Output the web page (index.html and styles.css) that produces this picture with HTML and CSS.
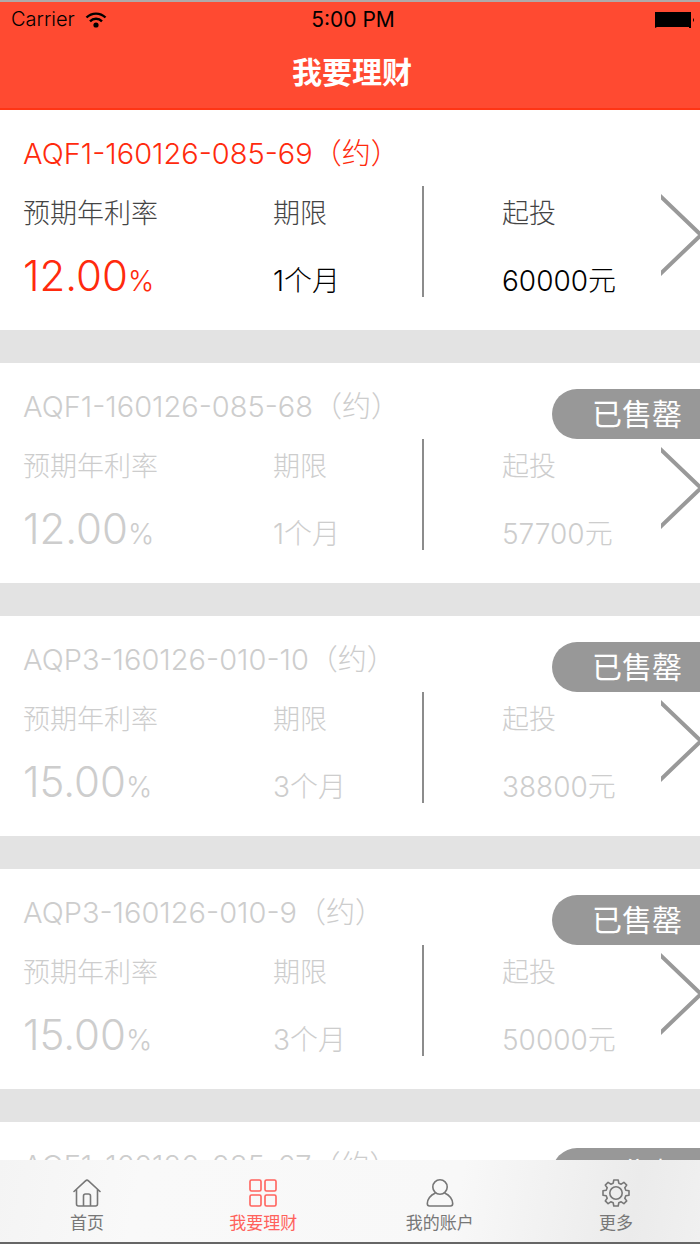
FILE: index.html
```html
<!DOCTYPE html>
<html lang="zh-CN">
<head>
    <meta charset="UTF-8">
    <meta name="viewport" content="width=device-width, initial-scale=1.0">
    <title>我要理财</title>
    <link rel="stylesheet" href="styles.css">
</head>
<body>
    <!-- 顶部 -->
    <header class="header">
        <div class="status-bar">
            <div class="carrier">
                <span>Carrier</span>
                <svg class="wifi" viewBox="0 0 22 16" aria-hidden="true">
                    <path d="M1.5 5.5a13.5 13.5 0 0 1 19 0M5 9.3a8.5 8.5 0 0 1 12 0" fill="none" stroke="#000" stroke-width="2.4"/>
                    <circle cx="11" cy="13" r="2.6"/>
                </svg>
            </div>
            <span class="time">5:00 PM</span>
            <div class="power">
                <svg class="battery" viewBox="0 0 40 16" aria-hidden="true">
                    <path d="M0 0h36v16H34V15H2L0 16zM38 6q2 2 0 4z"/>
                </svg>
            </div>
        </div>
        <h1 class="page-title">我要理财</h1>
    </header>

    <!-- 产品列表 -->
    <main class="list">
        <a class="card on-sale" href="#">
            <h2 class="card-title">AQF1-160126-085-69（约）</h2>
            <div class="card-body">
                <div class="cell">
                    <span class="label">预期年利率</span>
                    <span class="value rate"><b>12.00</b>%</span>
                </div>
                <div class="cell">
                    <span class="label">期限</span>
                    <span class="value">1个月</span>
                </div>
                <div class="cell amount">
                    <span class="label">起投</span>
                    <span class="value">60000元</span>
                </div>
                <svg class="arrow" viewBox="0 0 39 84" aria-hidden="true"><path d="M-3 0L40 41L-3 82"/></svg>
            </div>
        </a>

        <a class="card" href="#">
            <span class="badge">已售罄</span>
            <h2 class="card-title">AQF1-160126-085-68（约）</h2>
            <div class="card-body">
                <div class="cell">
                    <span class="label">预期年利率</span>
                    <span class="value rate"><b>12.00</b>%</span>
                </div>
                <div class="cell">
                    <span class="label">期限</span>
                    <span class="value">1个月</span>
                </div>
                <div class="cell amount">
                    <span class="label">起投</span>
                    <span class="value">57700元</span>
                </div>
                <svg class="arrow" viewBox="0 0 39 84" aria-hidden="true"><path d="M-3 0L40 41L-3 82"/></svg>
            </div>
        </a>

        <a class="card" href="#">
            <span class="badge">已售罄</span>
            <h2 class="card-title">AQP3-160126-010-10（约）</h2>
            <div class="card-body">
                <div class="cell">
                    <span class="label">预期年利率</span>
                    <span class="value rate"><b>15.00</b>%</span>
                </div>
                <div class="cell">
                    <span class="label">期限</span>
                    <span class="value">3个月</span>
                </div>
                <div class="cell amount">
                    <span class="label">起投</span>
                    <span class="value">38800元</span>
                </div>
                <svg class="arrow" viewBox="0 0 39 84" aria-hidden="true"><path d="M-3 0L40 41L-3 82"/></svg>
            </div>
        </a>

        <a class="card" href="#">
            <span class="badge">已售罄</span>
            <h2 class="card-title">AQP3-160126-010-9（约）</h2>
            <div class="card-body">
                <div class="cell">
                    <span class="label">预期年利率</span>
                    <span class="value rate"><b>15.00</b>%</span>
                </div>
                <div class="cell">
                    <span class="label">期限</span>
                    <span class="value">3个月</span>
                </div>
                <div class="cell amount">
                    <span class="label">起投</span>
                    <span class="value">50000元</span>
                </div>
                <svg class="arrow" viewBox="0 0 39 84" aria-hidden="true"><path d="M-3 0L40 41L-3 82"/></svg>
            </div>
        </a>

        <a class="card" href="#">
            <span class="badge">已售罄</span>
            <h2 class="card-title">AQF1-160126-085-67（约）</h2>
        </a>
    </main>

    <!-- 底部导航 -->
    <nav class="tab-bar">
        <a class="tab" href="#">
            <svg class="tab-icon" viewBox="0 0 28 28" aria-hidden="true">
                <path d="M1 12.5L12.5 1.8Q14 .5 15.5 1.8L27 12.5M3.5 10.5V25Q3.5 27 5.5 27H22.5Q24.5 27 24.5 25V10.5M10.5 27V17Q10.5 15 12.5 15H15.5Q17.5 15 17.5 17V27"/>
            </svg>
            <span>首页</span>
        </a>
        <a class="tab active" href="#">
            <svg class="tab-icon" viewBox="0 0 28 28" aria-hidden="true">
                <rect x="1" y="1" width="11" height="11" rx="1.5"/>
                <rect x="16" y="1" width="11" height="11" rx="1.5"/>
                <rect x="1" y="16" width="11" height="11" rx="1.5"/>
                <rect x="16" y="16" width="11" height="11" rx="1.5"/>
            </svg>
            <span>我要理财</span>
        </a>
        <a class="tab" href="#">
            <svg class="tab-icon" viewBox="0 0 28 28" aria-hidden="true">
                <circle cx="14" cy="8" r="7.2"/>
                <path d="M9 14.2C4.5 16 1.3 20.5 1.3 24.5Q1.3 27 3.5 27H24.5Q26.7 27 26.7 24.5C26.7 20.5 23.5 16 19 14.2"/>
            </svg>
            <span>我的账户</span>
        </a>
        <a class="tab" href="#">
            <svg class="tab-icon" viewBox="0 0 28 28" aria-hidden="true">
                <path d="M11.8 1H16.2L16.8 4.2L19.2 5.2L21.9 3.3L24.7 6.1L22.8 8.8L23.8 11.2L27 11.8V16.2L23.8 16.8L22.8 19.2L24.7 21.9L21.9 24.7L19.2 22.8L16.8 23.8L16.2 27H11.8L11.2 23.8L8.8 22.8L6.1 24.7L3.3 21.9L5.2 19.2L4.2 16.8L1 16.2V11.8L4.2 11.2L5.2 8.8L3.3 6.1L6.1 3.3L8.8 5.2L11.2 4.2Z"/>
                <circle cx="14" cy="14" r="6.2"/>
            </svg>
            <span>更多</span>
        </a>
    </nav>
</body>
</html>
```
FILE: styles.css
```css
* {
    box-sizing: border-box;
}

body {
    margin: 0;
    height: 100vh;
    display: flex;
    flex-direction: column;
    overflow: hidden;
    background-color: #e3e3e3;
    font-family: Inter, "Noto Sans CJK SC", sans-serif;
    font-weight: 300;
}

a {
    color: inherit;
    text-decoration: none;
}

/* 顶部 */
.header {
    flex: none;
    height: 110px;
    background-color: #ff4a31;
    border-top: 2px solid #b0a9a9;
    border-bottom: 2px solid #ff3515;
}

.status-bar {
    display: grid;
    grid-template-columns: 1fr auto 1fr;
    align-items: center;
    height: 35px;
    padding: 0 5px 0 11px;
    font-size: 20px;
    line-height: 35px;
}

.carrier {
    display: flex;
    align-items: center;
    gap: 10px;
}

.wifi {
    width: 22px;
    height: 16px;
}

.time {
    font-size: 21px;
    font-weight: 400;
}

.power {
    display: flex;
    justify-content: flex-end;
}

.battery {
    width: 40px;
    height: 16px;
}

.page-title {
    margin: 0;
    padding-left: 4px;
    font-size: 30px;
    line-height: 70px;
    font-weight: 700;
    text-align: center;
    color: #fff;
}

/* 产品列表 */
.list {
    flex: 1;
    min-height: 0;
    overflow-y: auto;
    scrollbar-width: none;
    display: flex;
    flex-direction: column;
    gap: 33px;
}

.card {
    flex: none;
    position: relative;
    height: 220px;
    padding: 24px 0 0 23px;
    background-color: #fff;
    color: #cdcdcd;
}

.card-title {
    margin: 0;
    font-size: 29px;
    line-height: 40px;
    font-weight: 300;
}

.card-body {
    display: grid;
    grid-template-columns: 250fr 149fr 239fr 39px;
    align-items: start;
    padding-top: 12px;
}

.cell {
    display: flex;
    flex-direction: column;
    justify-content: space-between;
    height: 111px;
    padding-top: 8px;
    font-size: 27px;
}

.amount {
    border-left: 2px solid #8c8c8c;
    padding-left: 78px;
}

.label {
    line-height: 40px;
}

.value {
    font-size: 28px;
    line-height: 32px;
}

.rate b {
    font-size: 42px;
    line-height: 20px;
    font-weight: 300;
}

.arrow {
    width: 39px;
    height: 84px;
    margin-top: 8px;
    fill: none;
    stroke: #999;
    stroke-width: 4;
}

.on-sale {
    color: #000;
}

.on-sale .label {
    color: #444;
}

.on-sale .card-title,
.on-sale .rate {
    color: #ff2a0d;
}

/* 已售罄标签 */
.badge {
    position: absolute;
    top: 26px;
    right: 0;
    width: 148px;
    padding-left: 40px;
    border-radius: 25px 0 0 25px;
    background-color: #989898;
    color: #fff;
    font-size: 30px;
    line-height: 50px;
    font-weight: 400;
}

/* 底部导航 */
.tab-bar {
    flex: none;
    display: flex;
    justify-content: space-between;
    height: 84px;
    padding: 19px 34px 0 37px;
    border-bottom: 2px solid #666;
    background: linear-gradient(100deg, #f4f4f4, #f9f9f9 20%, #f8f8f8 65%, #ebebeb 90%, #f0f0f0);
}

.tab {
    width: 100px;
    display: flex;
    flex-direction: column;
    align-items: center;
    gap: 4px;
    color: #777;
    font-size: 17px;
    line-height: 24px;
    font-weight: 400;
}

.tab-icon {
    width: 28px;
    height: 28px;
    fill: none;
    stroke: currentColor;
    stroke-width: 1.6;
    stroke-linejoin: round;
    stroke-linecap: round;
}

.active {
    color: #ff625c;
}
```
